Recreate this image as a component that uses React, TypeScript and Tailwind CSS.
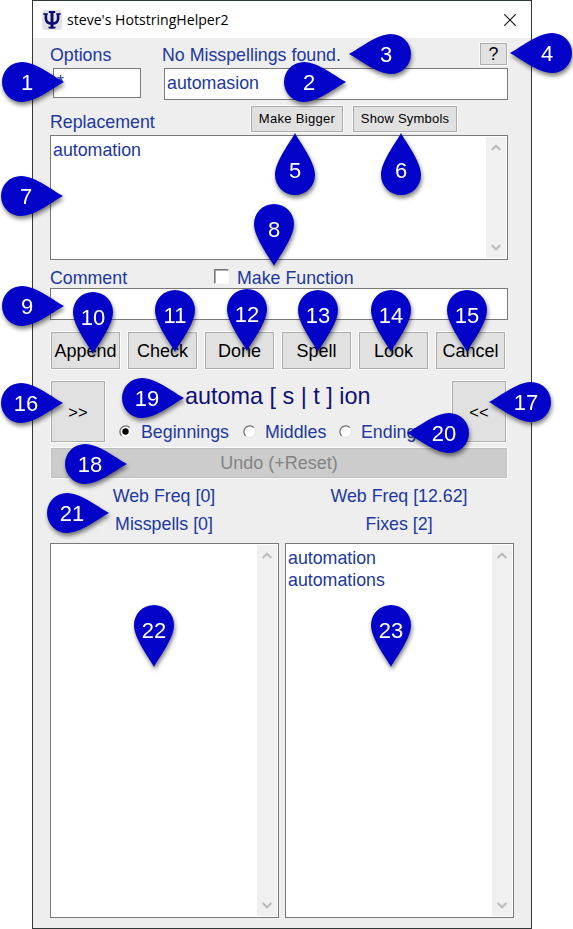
import React from "react";

type Dir = "up" | "down" | "left" | "right";

const pins: { n: number; x: number; y: number; dir: Dir }[] = [
  { n: 1, x: 22, y: 82, dir: "right" },
  { n: 2, x: 304, y: 82, dir: "right" },
  { n: 3, x: 391, y: 54, dir: "left" },
  { n: 4, x: 552, y: 53, dir: "left" },
  { n: 5, x: 295, y: 175, dir: "up" },
  { n: 6, x: 401, y: 175, dir: "up" },
  { n: 7, x: 21, y: 196, dir: "right" },
  { n: 8, x: 274, y: 224, dir: "down" },
  { n: 9, x: 22, y: 306, dir: "right" },
  { n: 10, x: 93, y: 312, dir: "down" },
  { n: 11, x: 175, y: 310, dir: "down" },
  { n: 12, x: 247, y: 309, dir: "down" },
  { n: 13, x: 318, y: 310, dir: "down" },
  { n: 14, x: 391, y: 310, dir: "down" },
  { n: 15, x: 467, y: 310, dir: "down" },
  { n: 16, x: 21, y: 403, dir: "right" },
  { n: 17, x: 531, y: 402, dir: "left" },
  { n: 18, x: 85, y: 464, dir: "right" },
  { n: 19, x: 142, y: 398, dir: "right" },
  { n: 20, x: 449, y: 433, dir: "left" },
  { n: 21, x: 67, y: 513, dir: "right" },
  { n: 22, x: 154, y: 625, dir: "down" },
  { n: 23, x: 391, y: 625, dir: "down" },
];

const turn: Record<Dir, number> = { down: 0, left: 90, up: 180, right: 270 };
const shift: Record<Dir, [number, number]> = {
  down: [0, 5],
  left: [-5, 0],
  up: [0, -5],
  right: [5, 0],
};

function Pin({ n, x, y, dir }: { n: number; x: number; y: number; dir: Dir }) {
  const [dx, dy] = shift[dir];
  return (
    <svg
      className="absolute h-[100px] w-[100px] drop-shadow-[1px_3px_2px_rgba(0,0,0,0.5)]"
      style={{ left: x - 50, top: y - 50 }}
      viewBox="-50 -50 100 100"
    >
      <path
        d="M0 42C-4 34-20 14-20 0A20 20 0 0 1 20 0C20 14 4 34 0 42Z"
        fill="#0202c8"
        transform={`rotate(${turn[dir]})`}
      />
      <text x={dx} y={dy + 8} textAnchor="middle" fontSize="22" fill="#fff">
        {n}
      </text>
    </svg>
  );
}

function Button({ className = "", children }: { className?: string; children: React.ReactNode }) {
  return (
    <button
      className={`flex shrink-0 items-center justify-center whitespace-nowrap border border-[#adadad] bg-[#e1e1e1] text-black outline outline-1 outline-[#fbfbfb] ${className}`}
    >
      {children}
    </button>
  );
}

function Scrollbar() {
  return (
    <div className="flex w-5 shrink-0 flex-col items-center justify-between bg-[#f0f0f0] py-[7px] text-[#bcbcbc]">
      <svg className="h-[8px] w-[10px]" viewBox="0 0 10 8" fill="none" stroke="currentColor" strokeWidth="2">
        <path d="M.7 6 5 1.7l4.3 4.3" />
      </svg>
      <svg className="h-[8px] w-[10px]" viewBox="0 0 10 8" fill="none" stroke="currentColor" strokeWidth="2">
        <path d="M.7 2 5 6.3l4.3-4.3" />
      </svg>
    </div>
  );
}

function Radio({ on, label, className = "" }: { on?: boolean; label: string; className?: string }) {
  return (
    <label className={`flex items-center ${className}`}>
      <svg className="-mt-[2px] mr-[9px] h-[13px] w-[13px]" viewBox="0 0 13 13">
        <circle cx="6.5" cy="6.5" r="5.9" fill="#fff" stroke="#e3e3e3" />
        <path d="M2.5 10.7A5.8 5.8 0 0 1 10.7 2.5" fill="none" stroke="#707070" strokeWidth="1.3" />
        {on && <circle cx="6.5" cy="6.5" r="3.2" fill="#000" />}
      </svg>
      {label}
    </label>
  );
}

const box = "shrink-0 border border-[#7a7a7a] bg-white";

export default function App() {
  return (
    <div className="relative h-[929px] w-[573px] overflow-hidden bg-white pl-8 font-['Liberation_Sans',Arial,sans-serif] text-[17.8px] leading-5 text-[#2038a0]">
      <div className="flex h-[929px] w-[500px] flex-col border border-[#30383a] bg-[#eee]">
        <header className="flex h-[37px] shrink-0 items-center bg-white pl-[9px] pr-[15px]">
          <svg className="h-5 w-5" viewBox="0 0 20 20">
            <rect width="20" height="20" rx="3" fill="#e2e2e6" />
            <g fill="none" stroke="#0b0b70" strokeWidth="2.6">
              <path d="M10 1.5v17" strokeWidth="3" />
              <path d="M3.9 4v4.5q0 5 6.1 5t6.1-5V4" />
              <path d="M6.8 2h6.4M6.5 17.6h7" strokeWidth="1.8" />
              <path d="M1.2 4h4.6M14.2 4h4.6" strokeWidth="1.7" />
            </g>
          </svg>
          <h1 className="ml-[5px] flex-1 font-['Open_Sans','Noto_Sans',sans-serif] text-[14.1px] text-black">
            steve's HotstringHelper2
          </h1>
          <svg className="h-3 w-3" viewBox="0 0 12 12" stroke="#111" strokeWidth="1.1">
            <path d="M.2.2 11.8 11.8M11.8.2.2 11.8" />
          </svg>
        </header>

        <main className="flex flex-col pl-[17px]">
          <div className="flex h-[30px] w-[458px] items-start">
            <span className="mt-[7px] w-[112px]">Options</span>
            <span className="mt-[7px] flex-1">No Misspellings found.</span>
            <Button className="mr-px mt-[5px] h-[22px] w-[27px]">?</Button>
          </div>
          <div className="flex w-[458px] items-start justify-between pl-[3px]">
            <div className={`${box} h-[30px] w-[88px] pl-[3px] pt-[3px]`}>*</div>
            <div className={`${box} h-8 w-[344px] pl-[2px] pt-[4px]`}>automasion</div>
          </div>
          <div className="flex h-[35px] items-start">
            <span className="mt-[12px] w-[201px]">Replacement</span>
            <Button className="mt-[6px] h-[26px] w-[92px] text-[13px] tracking-[0.3px]">Make Bigger</Button>
            <Button className="ml-[10px] mt-[6px] h-[26px] w-[104px] text-[13px] tracking-[0.2px]">Show Symbols</Button>
          </div>
          <div className={`${box} flex h-[125px] w-[458px] justify-between p-px`}>
            <span className="pl-px pt-[3px]">automation</span>
            <Scrollbar />
          </div>
          <div className="flex h-7 items-start">
            <span className="mt-2 w-[164px]">Comment</span>
            <span className="mt-[9px] h-[15px] w-[15px] border border-b-[#fafafa] border-l-[#777] border-r-[#fafafa] border-t-[#777] bg-white shadow-[inset_1px_1px_0_#aaa]" />
            <span className="ml-2 mt-2">Make Function</span>
          </div>
          <div className={`${box} h-8 w-[458px]`} />
          <div className="mt-[12px] flex gap-[8px] pl-px">
            {["Append", "Check", "Done", "Spell", "Look", "Cancel"].map((t) => (
              <Button key={t} className="h-[37px] w-[69px] text-[18px]">
                {t}
              </Button>
            ))}
          </div>
          <div className="mt-[12px] flex h-[61px] w-[456px] pl-px">
            <Button className="h-[61px] w-[54px] text-[16.5px]">&gt;&gt;</Button>
            <div className="flex-1">
              <div className="ml-[80px] mt-[3px] whitespace-pre text-[23.4px] leading-[24px] text-[#101078]">
                automa [ s | t ] ion
              </div>
              <div className="mt-[14px] flex whitespace-nowrap">
                <Radio on label="Beginnings" className="ml-[14px] w-[124px]" />
                <Radio label="Middles" className="w-[96px]" />
                <Radio label="Endings" className="w-[90px]" />
              </div>
            </div>
            <Button className="h-[61px] w-[54px] text-[16.5px]">&lt;&lt;</Button>
          </div>
          <div className="ml-px mt-[6px] flex h-[30px] w-[456px] items-center justify-center border border-[#bfbfbf] bg-[#ccc] text-[18px] text-[#838383] outline outline-1 outline-[#fbfbfb]">
            Undo (+Reset)
          </div>
          <div className="flex h-[65px] text-center leading-7">
            <div className="w-[228px] pt-[4px]">
              <p>Web Freq [0]</p>
              <p>Misspells [0]</p>
            </div>
            <div className="ml-[7px] w-[228px] pt-[4px]">
              <p>Web Freq [12.62]</p>
              <p>Fixes [2]</p>
            </div>
          </div>
          <div className="flex gap-[6px]">
            <div className={`${box} flex h-[375px] w-[229px] justify-end p-px`}>
              <Scrollbar />
            </div>
            <div className={`${box} flex h-[375px] w-[229px] justify-between p-px`}>
              <div className="pl-px pt-[2px] leading-[22px]">
                <p>automation</p>
                <p>automations</p>
              </div>
              <Scrollbar />
            </div>
          </div>
        </main>
      </div>
      {pins.map((p) => (
        <Pin key={p.n} {...p} />
      ))}
    </div>
  );
}
